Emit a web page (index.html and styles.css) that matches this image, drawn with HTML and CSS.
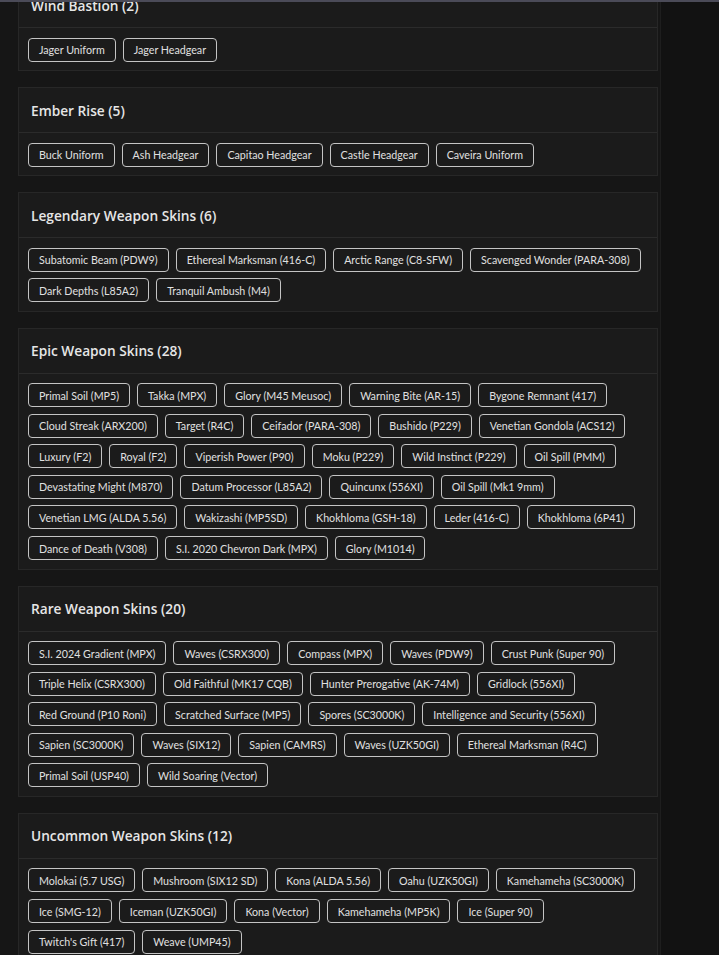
FILE: index.html
```html
<!DOCTYPE html>
<html lang="en">
<head>
<meta charset="utf-8">
<title>Unlocks</title>
<link rel="stylesheet" href="styles.css">
</head>
<body>
<div class="topline"></div>
<div class="layout">
  <main class="main">
    <section class="card">
      <h2 class="card-title">Wind Bastion (2)</h2>
      <div class="tags">
        <span class="tag">Jager Uniform</span>
        <span class="tag">Jager Headgear</span>
      </div>
    </section>
    <section class="card">
      <h2 class="card-title">Ember Rise (5)</h2>
      <div class="tags">
        <span class="tag">Buck Uniform</span>
        <span class="tag">Ash Headgear</span>
        <span class="tag">Capitao Headgear</span>
        <span class="tag">Castle Headgear</span>
        <span class="tag">Caveira Uniform</span>
      </div>
    </section>
    <section class="card">
      <h2 class="card-title">Legendary Weapon Skins (6)</h2>
      <div class="tags">
        <span class="tag">Subatomic Beam (PDW9)</span>
        <span class="tag">Ethereal Marksman (416-C)</span>
        <span class="tag">Arctic Range (C8-SFW)</span>
        <span class="tag">Scavenged Wonder (PARA-308)</span>
        <span class="tag">Dark Depths (L85A2)</span>
        <span class="tag">Tranquil Ambush (M4)</span>
      </div>
    </section>
    <section class="card">
      <h2 class="card-title">Epic Weapon Skins (28)</h2>
      <div class="tags">
        <span class="tag">Primal Soil (MP5)</span>
        <span class="tag">Takka (MPX)</span>
        <span class="tag">Glory (M45 Meusoc)</span>
        <span class="tag">Warning Bite (AR-15)</span>
        <span class="tag">Bygone Remnant (417)</span>
        <span class="tag">Cloud Streak (ARX200)</span>
        <span class="tag">Target (R4C)</span>
        <span class="tag">Ceifador (PARA-308)</span>
        <span class="tag">Bushido (P229)</span>
        <span class="tag">Venetian Gondola (ACS12)</span>
        <span class="tag">Luxury (F2)</span>
        <span class="tag">Royal (F2)</span>
        <span class="tag">Viperish Power (P90)</span>
        <span class="tag">Moku (P229)</span>
        <span class="tag">Wild Instinct (P229)</span>
        <span class="tag">Oil Spill (PMM)</span>
        <span class="tag">Devastating Might (M870)</span>
        <span class="tag">Datum Processor (L85A2)</span>
        <span class="tag">Quincunx (556XI)</span>
        <span class="tag">Oil Spill (Mk1 9mm)</span>
        <span class="tag">Venetian LMG (ALDA 5.56)</span>
        <span class="tag">Wakizashi (MP5SD)</span>
        <span class="tag">Khokhloma (GSH-18)</span>
        <span class="tag">Leder (416-C)</span>
        <span class="tag">Khokhloma (6P41)</span>
        <span class="tag">Dance of Death (V308)</span>
        <span class="tag">S.I. 2020 Chevron Dark (MPX)</span>
        <span class="tag">Glory (M1014)</span>
      </div>
    </section>
    <section class="card">
      <h2 class="card-title">Rare Weapon Skins (20)</h2>
      <div class="tags">
        <span class="tag">S.I. 2024 Gradient (MPX)</span>
        <span class="tag">Waves (CSRX300)</span>
        <span class="tag">Compass (MPX)</span>
        <span class="tag">Waves (PDW9)</span>
        <span class="tag">Crust Punk (Super 90)</span>
        <span class="tag">Triple Helix (CSRX300)</span>
        <span class="tag">Old Faithful (MK17 CQB)</span>
        <span class="tag">Hunter Prerogative (AK-74M)</span>
        <span class="tag">Gridlock (556XI)</span>
        <span class="tag">Red Ground (P10 Roni)</span>
        <span class="tag">Scratched Surface (MP5)</span>
        <span class="tag">Spores (SC3000K)</span>
        <span class="tag">Intelligence and Security (556XI)</span>
        <span class="tag">Sapien (SC3000K)</span>
        <span class="tag">Waves (SIX12)</span>
        <span class="tag">Sapien (CAMRS)</span>
        <span class="tag">Waves (UZK50GI)</span>
        <span class="tag">Ethereal Marksman (R4C)</span>
        <span class="tag">Primal Soil (USP40)</span>
        <span class="tag">Wild Soaring (Vector)</span>
      </div>
    </section>
    <section class="card">
      <h2 class="card-title">Uncommon Weapon Skins (12)</h2>
      <div class="tags">
        <span class="tag">Molokai (5.7 USG)</span>
        <span class="tag">Mushroom (SIX12 SD)</span>
        <span class="tag">Kona (ALDA 5.56)</span>
        <span class="tag">Oahu (UZK50GI)</span>
        <span class="tag">Kamehameha (SC3000K)</span>
        <span class="tag">Ice (SMG-12)</span>
        <span class="tag">Iceman (UZK50GI)</span>
        <span class="tag">Kona (Vector)</span>
        <span class="tag">Kamehameha (MP5K)</span>
        <span class="tag">Ice (Super 90)</span>
        <span class="tag">Twitch's Gift (417)</span>
        <span class="tag">Weave (UMP45)</span>
      </div>
    </section>
  </main>
  <aside class="side"></aside>
</div>
</body>
</html>
```

FILE: styles.css
```css
* { box-sizing: border-box; }
html, body { margin: 0; padding: 0; }
body {
  background: #121212;
  font-family: "Open Sans", "Liberation Sans", sans-serif;
  color: #e4e4e4;
  overflow: hidden;
  height: 955px;
}
.topline {
  position: fixed;
  top: 0; left: 0; right: 0;
  height: 2px;
  background: #4b4b58;
  z-index: 5;
}
.layout {
  display: flex;
  align-items: stretch;
  min-height: 1200px;
}
.main {
  width: 661px;
  flex: none;
  background: #161616;
  border-right: 1px solid #1e1e1e;
  padding: 0 0 0 18px;
  margin-top: -18px;
  display: flex;
  flex-direction: column;
  gap: 16px;
}
.side { flex: 1; background: #121212; }
.card {
  width: 640px;
  background: #1b1b1b;
  border: 1px solid #272727;
}
.card-title {
  margin: 0;
  height: 45px;
  padding: 0 12px;
  display: flex;
  align-items: center;
  font-size: 13.7px;
  font-weight: 600;
  color: #e6e6e6;
  border-bottom: 1px solid #2b2b2b;
}
.tags {
  display: flex;
  flex-wrap: wrap;
  gap: 6.6px 7px;
  padding: 9.5px 9px 8.5px;
}
.tag {
  display: inline-flex;
  align-items: center;
  height: 24px;
  padding: 0 10px;
  border: 1px solid #c4c4c4;
  border-radius: 4px;
  font-family: Lato, "Open Sans", sans-serif;
  font-size: 10.7px;
  color: #e0e0e0;
  white-space: nowrap;
}
```
